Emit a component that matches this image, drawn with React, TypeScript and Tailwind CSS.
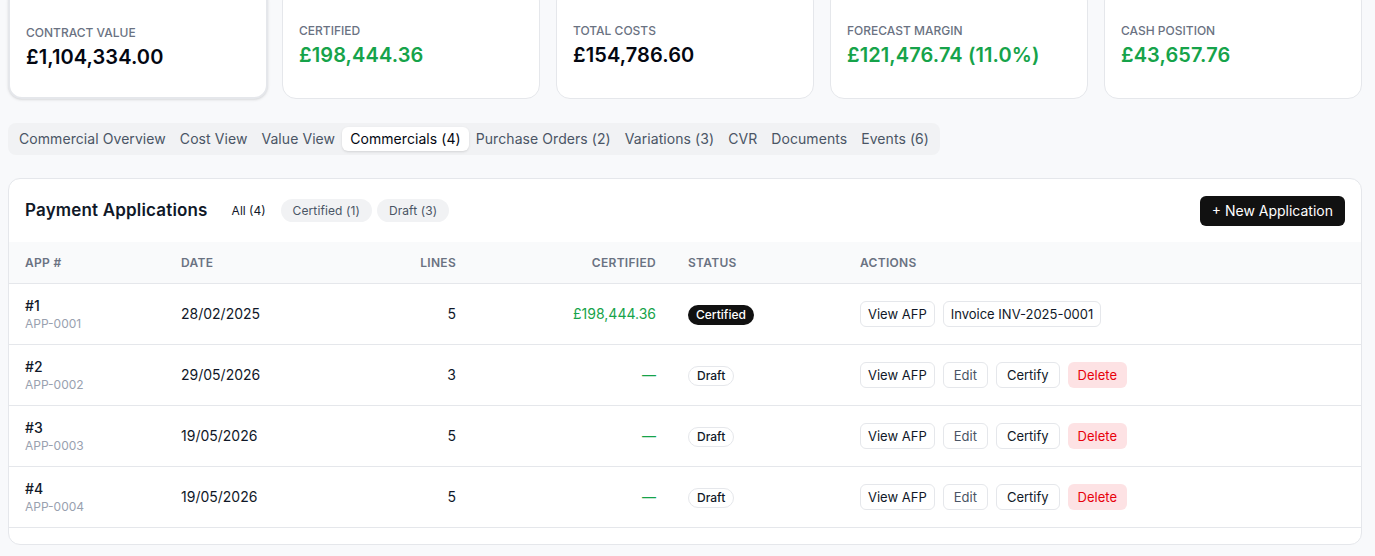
import React from "react";

const STATS = [
  { label: "Contract Value", value: "£1,104,334.00", green: false },
  { label: "Certified", value: "£198,444.36", green: true },
  { label: "Total Costs", value: "£154,786.60", green: false },
  { label: "Forecast Margin", value: "£121,476.74 (11.0%)", green: true },
  { label: "Cash Position", value: "£43,657.76", green: true },
];

const TABS = [
  "Commercial Overview",
  "Cost View",
  "Value View",
  "Commercials (4)",
  "Purchase Orders (2)",
  "Variations (3)",
  "CVR",
  "Documents",
  "Events (6)",
];

const APPS = [
  { n: "#1", ref: "APP-0001", date: "28/02/2025", lines: 5, certified: "£198,444.36", status: "Certified" },
  { n: "#2", ref: "APP-0002", date: "29/05/2026", lines: 3, certified: null, status: "Draft" },
  { n: "#3", ref: "APP-0003", date: "19/05/2026", lines: 5, certified: null, status: "Draft" },
  { n: "#4", ref: "APP-0004", date: "19/05/2026", lines: 5, certified: null, status: "Draft" },
];

// fixed column widths so headers and rows line up
const COLS = "grid grid-cols-[156px_207px_100px_200px_172px_1fr]";

function ActionButton({
  children,
  muted,
  tight,
}: {
  children: React.ReactNode;
  muted?: boolean;
  tight?: boolean;
}) {
  return (
    <button
      className={`h-[26px] rounded-md border border-gray-200 bg-white text-[13px] leading-none ${
        tight ? "px-[7px]" : "px-[10px]"
      } ${muted ? "text-gray-600" : "text-gray-900"}`}
    >
      {children}
    </button>
  );
}

export default function App() {
  return (
    <div
      className="min-h-[556px] overflow-hidden bg-[#f8f9fb] pl-2 pr-[13px] pb-4"
      style={{ fontFamily: "Inter, 'Noto Sans', sans-serif" }}
    >
      {/* summary cards */}
      <div className="-mt-[13px] grid grid-cols-5 gap-4">
        {STATS.map((s, i) => (
          <div
            key={s.label}
            className={`h-[112px] rounded-[14px] bg-white px-4 ${
              i === 0
                ? "-mr-[2px] border-[2.5px] border-gray-200 pt-[36px] shadow-sm"
                : "border border-gray-200 pt-[35px]"
            }`}
          >
            <div className="text-xs font-medium uppercase leading-4 text-gray-500">{s.label}</div>
            <div
              className={`mt-0.5 text-xl font-semibold leading-7 tracking-[0.005em] ${
                s.green ? "text-[#16a34a]" : "text-gray-950"
              }`}
            >
              {s.value}
            </div>
          </div>
        ))}
      </div>

      {/* tabs */}
      <div className="mt-6 inline-flex rounded-lg bg-[#f1f2f4] p-1">
        {TABS.map((t) => (
          <div
            key={t}
            className={`rounded-md py-[3px] text-sm leading-[18px] tracking-[0.07px] ${
              t === "Commercials (4)"
                ? "px-[8px] bg-white text-gray-950 shadow-sm"
                : "px-[7px] text-gray-600"
            }`}
          >
            {t}
          </div>
        ))}
      </div>

      {/* payment applications */}
      <div className="mt-[23px] overflow-hidden rounded-xl border border-gray-200 bg-white pb-4">
        <div className="flex h-[63px] items-center justify-between px-4">
          <div className="flex items-center gap-3.5">
            <h2 className="text-[17px] font-semibold tracking-[0.01em] text-gray-900">
              Payment Applications
            </h2>
            <div className="flex items-center gap-[5px]">
              <span className="rounded-full px-2.5 py-1 text-xs leading-[15px] text-gray-900">All (4)</span>
              <span className="rounded-full bg-[#f1f2f4] px-3 py-1 text-xs leading-[15px] tracking-[0.1px] text-gray-600">
                Certified (1)
              </span>
              <span className="rounded-full bg-[#f1f2f4] px-3 py-1 text-xs leading-[15px] tracking-[0.1px] text-gray-600">
                Draft (3)
              </span>
            </div>
          </div>
          <button className="h-[30px] rounded-md bg-[#111111] px-3 text-sm text-white">
            + New Application
          </button>
        </div>

        <div
          className={`${COLS} h-[42px] items-center border-b border-gray-200 bg-gray-50 text-xs font-semibold uppercase tracking-wide text-gray-500`}
        >
          <div className="px-4">App #</div>
          <div className="px-4">Date</div>
          <div className="px-4 text-right">Lines</div>
          <div className="px-4 text-right">Certified</div>
          <div className="px-4">Status</div>
          <div className="px-4">Actions</div>
        </div>

        {APPS.map((a) => (
          <div
            key={a.ref}
            className={`${COLS} h-[61px] items-center border-b border-gray-200 text-sm text-gray-900`}
          >
            <div className="px-4">
              <div className="font-medium leading-5">{a.n}</div>
              <div className="text-xs leading-4 text-gray-400">{a.ref}</div>
            </div>
            <div className="px-4">{a.date}</div>
            <div className="px-4 text-right">{a.lines}</div>
            <div className="px-4 text-right text-[#16a34a]">{a.certified ?? "—"}</div>
            <div className="px-4">
              {a.status === "Certified" ? (
                <span className="inline-block rounded-full bg-[#111111] px-2 py-0.5 text-xs leading-4 font-medium text-white">
                  Certified
                </span>
              ) : (
                <span className="inline-block rounded-full border border-gray-200 bg-white px-2 py-[1px] text-xs leading-4 font-medium text-gray-900">
                  Draft
                </span>
              )}
            </div>
            <div className="flex items-center gap-2 px-4">
              <ActionButton tight>View AFP</ActionButton>
              {a.status === "Certified" ? (
                <ActionButton tight>Invoice INV-2025-0001</ActionButton>
              ) : (
                <>
                  <ActionButton muted>Edit</ActionButton>
                  <ActionButton>Certify</ActionButton>
                  <button className="h-[26px] rounded-md bg-[#fde2e4] px-[10px] text-[13px] leading-none text-[#e7000b]">
                    Delete
                  </button>
                </>
              )}
            </div>
          </div>
        ))}
      </div>
    </div>
  );
}
